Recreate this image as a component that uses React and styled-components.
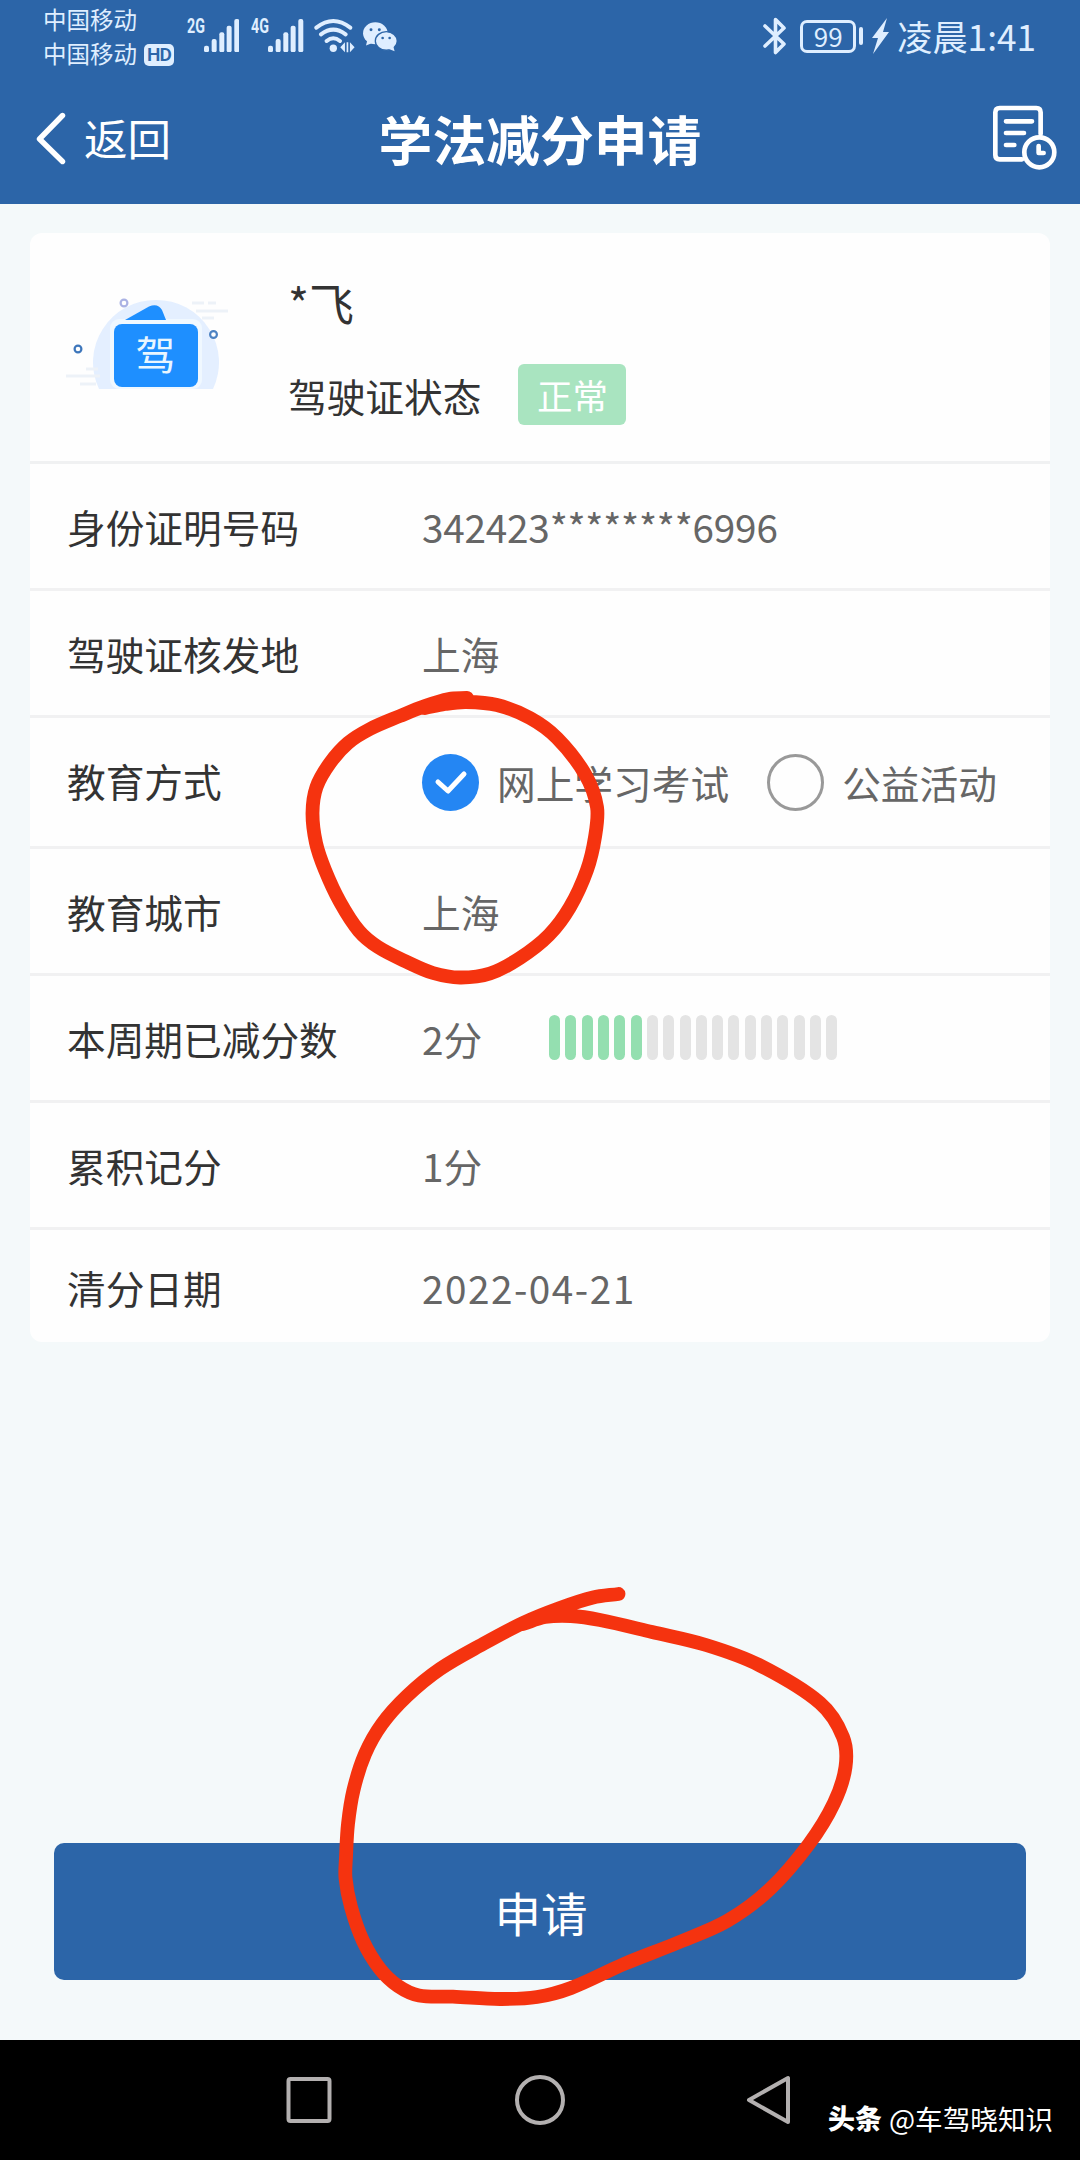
import React from 'react';
import styled, { createGlobalStyle } from 'styled-components';

const BLUE = '#2c65a8';
const ICE = '#dfeeff';

const GlobalStyle = createGlobalStyle`
  * { box-sizing: border-box; }
  body {
    margin: 0;
    background: #f4f9fa;
    font-family: 'Noto Sans CJK SC', 'Noto Sans', sans-serif;
  }
`;

const Screen = styled.div`
  position: relative;
  width: 1080px;
  height: 2160px;
  display: flex;
  flex-direction: column;
  overflow: hidden;
  background: #f4f9fa;
`;

/* ---------- status bar ---------- */

const StatusBar = styled.div`
  height: 72px;
  flex: none;
  display: flex;
  justify-content: space-between;
  padding: 0 44px 0 43px;
  background: ${BLUE};
  color: ${ICE};
`;

const StatusGroup = styled.div`
  display: flex;
  align-items: ${(p) => p.$align || 'flex-start'};
`;

const Carriers = styled.div`
  width: 143.5px;
  padding-top: 1.5px;
  display: flex;
  flex-direction: column;
`;

const Carrier = styled.div`
  height: 34.5px;
  display: flex;
  align-items: center;
  gap: 7px;
  font-size: 23.5px;
  line-height: 34px;
  white-space: nowrap;
`;

const HdBadge = styled.span`
  width: 30px;
  height: 22px;
  margin-top: 3px;
  border-radius: 5px;
  background: ${ICE};
  color: ${BLUE};
  font: 600 19px/22px Roboto, sans-serif;
  letter-spacing: -0.8px;
  text-align: center;
`;

const Signal = styled.div`
  display: flex;
  align-items: flex-start;
  margin: 19px 11.5px 0 0;
`;

const Generation = styled.span`
  width: 17.5px;
  font: 700 21px/15px Roboto, sans-serif;
  transform: scaleX(0.68);
  transform-origin: left;
`;

const StatusIcon = styled.svg`
  display: block;
  flex: none;
  width: ${(p) => p.$w}px;
  height: ${(p) => p.$h}px;
  margin: ${(p) => p.$m || 0};
`;

const Battery = styled.div`
  width: 56px;
  height: 33px;
  border: 3px solid ${ICE};
  border-radius: 7px;
  font-size: 26px;
  line-height: 25px;
  text-align: center;
`;

const BatteryCap = styled.div`
  width: 4px;
  height: 18px;
  margin: 0 9px 0 3px;
  border-radius: 2px;
  background: ${ICE};
`;

const Clock = styled.span`
  margin-left: 8px;
  font-size: 35.2px;
  line-height: 72px;
  white-space: nowrap;
`;

/* ---------- title bar ---------- */

const TitleBar = styled.header`
  height: 132px;
  flex: none;
  display: grid;
  grid-template-columns: 1fr auto 1fr;
  align-items: center;
  padding: 0 23px 0 35px;
  background: ${BLUE};
  color: #fff;
`;

const Back = styled.div`
  display: flex;
  align-items: center;
  gap: 17px;
  font-size: 43.5px;
  line-height: 60px;
`;

const Title = styled.h1`
  margin: 0 0 0 -12px;
  font-size: 53.8px;
  line-height: 70px;
  font-weight: 700;
`;

const HistoryIcon = styled.svg`
  width: 65.3px;
  height: 65.3px;
  justify-self: end;
`;

/* ---------- card ---------- */

const Content = styled.main`
  flex: 1;
  display: flex;
  flex-direction: column;
  justify-content: space-between;
  padding: 29px 30px 60px;
`;

const Card = styled.section`
  height: 1109px;
  border-radius: 12px;
  background: #fefefe;
`;

const Profile = styled.div`
  height: 231px;
  display: flex;
  border-bottom: 3px solid #f0f1f2;
`;

const LicenceArt = styled.svg`
  width: 170px;
  height: 120px;
  margin: 53px 0 0 30px;
`;

const ProfileText = styled.div`
  padding: 40px 0 0 58px;
  color: #333;
`;

const Name = styled.div`
  height: 60px;
  font-size: 45px;
  line-height: 60px;
  margin-bottom: 31px;
`;

const LicenceState = styled.div`
  display: flex;
  align-items: center;
  gap: 37px;
  font-size: 38.7px;
  line-height: 60px;
`;

const StateBadge = styled.span`
  width: 108px;
  height: 61px;
  border-radius: 6px;
  background: #a9e4c0;
  color: #fff;
  font-size: 35.5px;
  line-height: 61px;
  text-align: center;
`;

const Row = styled.div`
  height: ${(p) => p.$h || 127}px;
  display: flex;
  align-items: center;
  padding: ${(p) => p.$top || 0}px 0 0 37px;
  border-bottom: ${(p) => (p.$last ? 'none' : '3px solid #f1f1f2')};
  font-size: 38.7px;
  line-height: 56px;
  white-space: nowrap;
`;

const Label = styled.span`
  width: 355px;
  flex: none;
  padding-bottom: ${(p) => p.$lift || 0}px;
  color: #333;
`;

const Value = styled.span`
  color: #666;
  letter-spacing: ${(p) => p.$spacing || 0}px;
`;

const Option = styled.span`
  display: flex;
  align-items: center;
  gap: 18px;
  margin-right: 38px;
  color: #666;
`;

const Radio = styled.span`
  width: 57px;
  height: 57px;
  display: grid;
  place-items: center;
  border-radius: 50%;
  border: ${(p) => (p.$checked ? 'none' : '3px solid #999')};
  background: ${(p) => (p.$checked ? '#2486f3' : 'transparent')};
`;

const Meter = styled.div`
  display: flex;
  gap: 5.3px;
  margin: -2px 0 0 67px;
`;

const MeterBar = styled.span`
  width: 11px;
  height: 45px;
  border-radius: 6px;
  background: ${(p) => (p.$on ? '#94dfb0' : '#e4e4e4')};
`;

const ApplyButton = styled.button`
  height: 137px;
  margin: 0 24px;
  padding: 0 0 0 2px;
  border: 0;
  border-radius: 10px;
  background: ${BLUE};
  color: #fff;
  font-family: inherit;
  font-size: 46.5px;
  line-height: 135px;
`;

/* ---------- system navigation ---------- */

const NavBar = styled.nav`
  height: 120px;
  flex: none;
  display: flex;
  align-items: flex-start;
  padding: 34px 24px 0 285px;
  background: #000;
`;

const NavIcon = styled.svg`
  width: 52px;
  height: 52px;
  flex: none;
  margin-right: ${(p) => p.$gap}px;
`;

const Credit = styled.div`
  display: flex;
  gap: 7px;
  margin: 24px 0 0;
  color: #fff;
  font-size: 27.6px;
  line-height: 40px;
  white-space: nowrap;
`;

const CreditBrand = styled.span`
  font-size: 27px;
  font-weight: 900;
`;

const Ink = styled.svg`
  position: absolute;
  left: 0;
  top: 0;
  width: 1080px;
  height: 2160px;
  pointer-events: none;
`;

/* Smooth curve through the points of a pen stroke, with tangents scaled by chord length */
function strokePath(points) {
  const dist = (a, b) => Math.hypot(b[0] - a[0], b[1] - a[1]);
  const tangent = (i) => {
    const a = points[Math.max(i - 1, 0)];
    const b = points[i];
    const c = points[Math.min(i + 1, points.length - 1)];
    const span = dist(a, b) + dist(b, c);
    return [(c[0] - a[0]) / span, (c[1] - a[1]) / span];
  };
  let d = `M${points[0][0]} ${points[0][1]}`;
  for (let i = 0; i < points.length - 1; i += 1) {
    const b = points[i];
    const c = points[i + 1];
    const k = dist(b, c) / 3;
    const t = tangent(i);
    const u = tangent(i + 1);
    d += ` C${b[0] + t[0] * k} ${b[1] + t[1] * k} ${c[0] - u[0] * k} ${c[1] - u[1] * k} ${c[0]} ${c[1]}`;
  }
  return d;
}

const choiceStroke = [
  [467, 698], [449, 699], [425, 706], [400, 716], [370, 729], [348, 743], [330, 763],
  [316.5, 787], [312.5, 813], [316, 843], [325, 870], [340, 902], [359, 931], [378, 947],
  [407, 962], [433, 973], [460, 977.5], [490, 973.5], [520, 958], [549, 935], [570, 907],
  [587, 870], [595, 837], [597, 807], [585, 774], [557, 738], [530, 718], [497, 705],
  [466, 702], [445, 704], [425, 708],
];

const applyStroke = [
  [618.500, 1594], [593, 1597.500], [560, 1608], [523, 1623], [483, 1644], [440, 1669],
  [407, 1696], [382, 1724], [365, 1754], [353.500, 1790], [348, 1824], [346, 1857], [345.500, 1878],
  [351, 1907], [363, 1941], [380, 1969], [398, 1986], [419, 1995.500], [453, 1996.700],
  [500, 1999], [537, 1997], [571, 1988], [624, 1964], [677, 1943], [727, 1921], [770, 1889],
  [809, 1844], [834, 1803], [845.500, 1767], [843, 1737], [820, 1703], [759, 1665], [706, 1645],
  [652, 1632], [600, 1620], [571, 1616], [545, 1617], [523, 1624],
];

function SignalStrength({ label }) {
  return (
    <Signal>
      <Generation>{label}</Generation>
      <StatusIcon $w={35.3} $h={33.3} viewBox="0 0 106 100" fill={ICE}>
        <rect x="0" y="80" width="15" height="20" rx="6" />
        <rect x="23" y="60" width="15" height="40" rx="6" />
        <rect x="46" y="40" width="15" height="60" rx="6" />
        <rect x="68" y="20" width="15" height="80" rx="6" />
        <rect x="91" y="0" width="15" height="100" rx="6" />
      </StatusIcon>
    </Signal>
  );
}

function Wifi() {
  return (
    <StatusIcon $w={40.6} $h={34.6} $m="18px 7px 0 -1px" viewBox="943 55 122 104" fill="none" stroke={ICE} strokeWidth="12" strokeLinecap="round">
      <path d="M950 84Q1001 44 1052 84M964 104Q1001 76 1038 104M981 124Q1001 108 1021 124" />
      <circle cx="1001" cy="146" r="11" fill={ICE} stroke="none" />
      <path d="M1022 143L1036 128V158ZM1041 128h5v30h-5zM1051 128L1065 143L1051 158Z" fill={ICE} stroke="none" />
    </StatusIcon>
  );
}

function WeChat() {
  return (
    <StatusIcon $w={35.3} $h={30.6} $m="21px 0 0" viewBox="1085 62 106 92">
      <g fill={ICE}>
        <ellipse cx="1125" cy="99" rx="37" ry="33" />
        <path d="M1101 120L1097 136L1116 128Z" />
        <ellipse cx="1158" cy="122" rx="33" ry="28" stroke={BLUE} strokeWidth="4" />
        <path d="M1166 146L1183 153L1179 138Z" />
      </g>
      <g fill={BLUE}>
        <circle cx="1112" cy="88" r="4.5" />
        <circle cx="1137" cy="88" r="4.5" />
        <circle cx="1147" cy="113" r="4" />
        <circle cx="1168" cy="113" r="4" />
      </g>
    </StatusIcon>
  );
}

function LicenceIllustration() {
  return (
    <LicenceArt viewBox="60 286 170 120">
      <path d="M99 389A63 62.500 0 1 1 213 389Z" fill="#e4efff" />
      <path d="M192 303h12m4 0h8M196 311h32M202 318h12M86 369h12M66 376h34M80 384h16" stroke="#edf2f8" strokeWidth="3" fill="none" />
      <rect x="110" y="319" width="92" height="70" rx="9" fill="#f0f8ff" />
      <path d="M125 320L149 306.500Q158 303 162 310L166 320Z" fill="#1e8fff" />
      <rect x="114" y="324" width="84" height="63" rx="8" fill="#1e8fff" />
      <text x="155.500" y="370" textAnchor="middle" fontSize="40" fill="#e9f6ff" fontFamily="'Noto Sans CJK SC', sans-serif">驾</text>
      <g fill="#fff" strokeWidth="2.200">
        <circle cx="124" cy="303" r="3.400" stroke="#aab2e4" />
        <circle cx="213.500" cy="334.500" r="3.400" stroke="#4d82c2" />
        <circle cx="78" cy="349" r="3.400" stroke="#3d76bb" />
      </g>
    </LicenceArt>
  );
}

export default function App() {
  return (
    <Screen>
      <GlobalStyle />
      <StatusBar>
        <StatusGroup>
          <Carriers>
            <Carrier>中国移动</Carrier>
            <Carrier>中国移动<HdBadge>HD</HdBadge></Carrier>
          </Carriers>
          <SignalStrength label="2G" />
          <SignalStrength label="4G" />
          <Wifi />
          <WeChat />
        </StatusGroup>
        <StatusGroup $align="center">
          <StatusIcon $w={24} $h={38} $m="0 13px 0 0" viewBox="0 0 24 38" fill="none" stroke={ICE} strokeWidth="3.600" strokeLinejoin="round" strokeLinecap="round">
            <path d="M2 9L21 27L12.500 35.500V2.500L21 11L2 29" />
          </StatusIcon>
          <Battery>99</Battery>
          <BatteryCap />
          <StatusIcon $w={17} $h={36} viewBox="0 0 17 36" fill={ICE}>
            <path d="M15 0L0 20H6L1 36L17 14H11L15 0Z" />
          </StatusIcon>
          <Clock>凌晨1:41</Clock>
        </StatusGroup>
      </StatusBar>

      <TitleBar>
        <Back>
          <svg width="32" height="54" viewBox="0 0 32 54" fill="none" stroke="#fff" strokeWidth="5.400" strokeLinecap="round" strokeLinejoin="round">
            <path d="M27.500 4.500L4.500 28L27.500 50.500" />
          </svg>
          返回
        </Back>
        <Title>学法减分申请</Title>
        <HistoryIcon viewBox="815 315 196 196" fill="none" stroke="#fff" strokeWidth="14" strokeLinecap="round" strokeLinejoin="round">
          <path d="M905 478H838Q825 478 825 465V337Q825 324 838 324H948Q961 324 961 337V402" />
          <path d="M857 364H935M857 399H911M857 435H882" />
          <circle cx="957" cy="457" r="45" />
          <path d="M955 438V459H970" />
        </HistoryIcon>
      </TitleBar>

      <Content>
        <Card>
          <Profile>
            <LicenceIllustration />
            <ProfileText>
              <Name>*飞</Name>
              <LicenceState>驾驶证状态<StateBadge>正常</StateBadge></LicenceState>
            </ProfileText>
          </Profile>
          <Row><Label>身份证明号码</Label><Value $spacing={-0.2}>342423********6996</Value></Row>
          <Row><Label>驾驶证核发地</Label><Value>上海</Value></Row>
          <Row $h={131}>
            <Label $lift={4}>教育方式</Label>
            <Option>
              <Radio $checked>
                <svg width="34" height="26" viewBox="0 0 34 26" fill="none" stroke="#fff" strokeWidth="5" strokeLinecap="round" strokeLinejoin="round">
                  <path d="M4 13L14 22L30 5" />
                </svg>
              </Radio>
              网上学习考试
            </Option>
            <Option><Radio />公益活动</Option>
          </Row>
          <Row><Label>教育城市</Label><Value>上海</Value></Row>
          <Row>
            <Label>本周期已减分数</Label>
            <Value>2分</Value>
            <Meter>
              {Array.from({ length: 18 }, (_, i) => <MeterBar key={i} $on={i < 6} />)}
            </Meter>
          </Row>
          <Row><Label>累积记分</Label><Value>1分</Value></Row>
          <Row $h={112} $top={1} $last><Label>清分日期</Label><Value $spacing={1.5}>2022-04-21</Value></Row>
        </Card>
        <ApplyButton>申请</ApplyButton>
      </Content>

      <NavBar>
        <NavIcon $gap={177} viewBox="285 2074 52 52" fill="none" stroke="#b3b0b0" strokeWidth="4">
          <rect x="288.500" y="2079" width="41" height="42" rx="2" />
        </NavIcon>
        <NavIcon $gap={179} viewBox="514 2074 52 52" fill="none" stroke="#b3b0b0" strokeWidth="4">
          <circle cx="540" cy="2100" r="23" />
        </NavIcon>
        <NavIcon $gap={31} viewBox="745 2074 52 52" fill="none" stroke="#b3b0b0" strokeWidth="4" strokeLinejoin="round">
          <path d="M788 2078V2122L749 2100Z" />
        </NavIcon>
        <Credit><CreditBrand>头条</CreditBrand><span>@车驾晓知识</span></Credit>
      </NavBar>

      <Ink viewBox="0 0 1080 2160" fill="none" stroke="#f5330f" strokeWidth="13.800" strokeLinecap="round" strokeLinejoin="round">
        <path d={strokePath(choiceStroke)} />
        <path d={strokePath(applyStroke)} />
      </Ink>
    </Screen>
  );
}
